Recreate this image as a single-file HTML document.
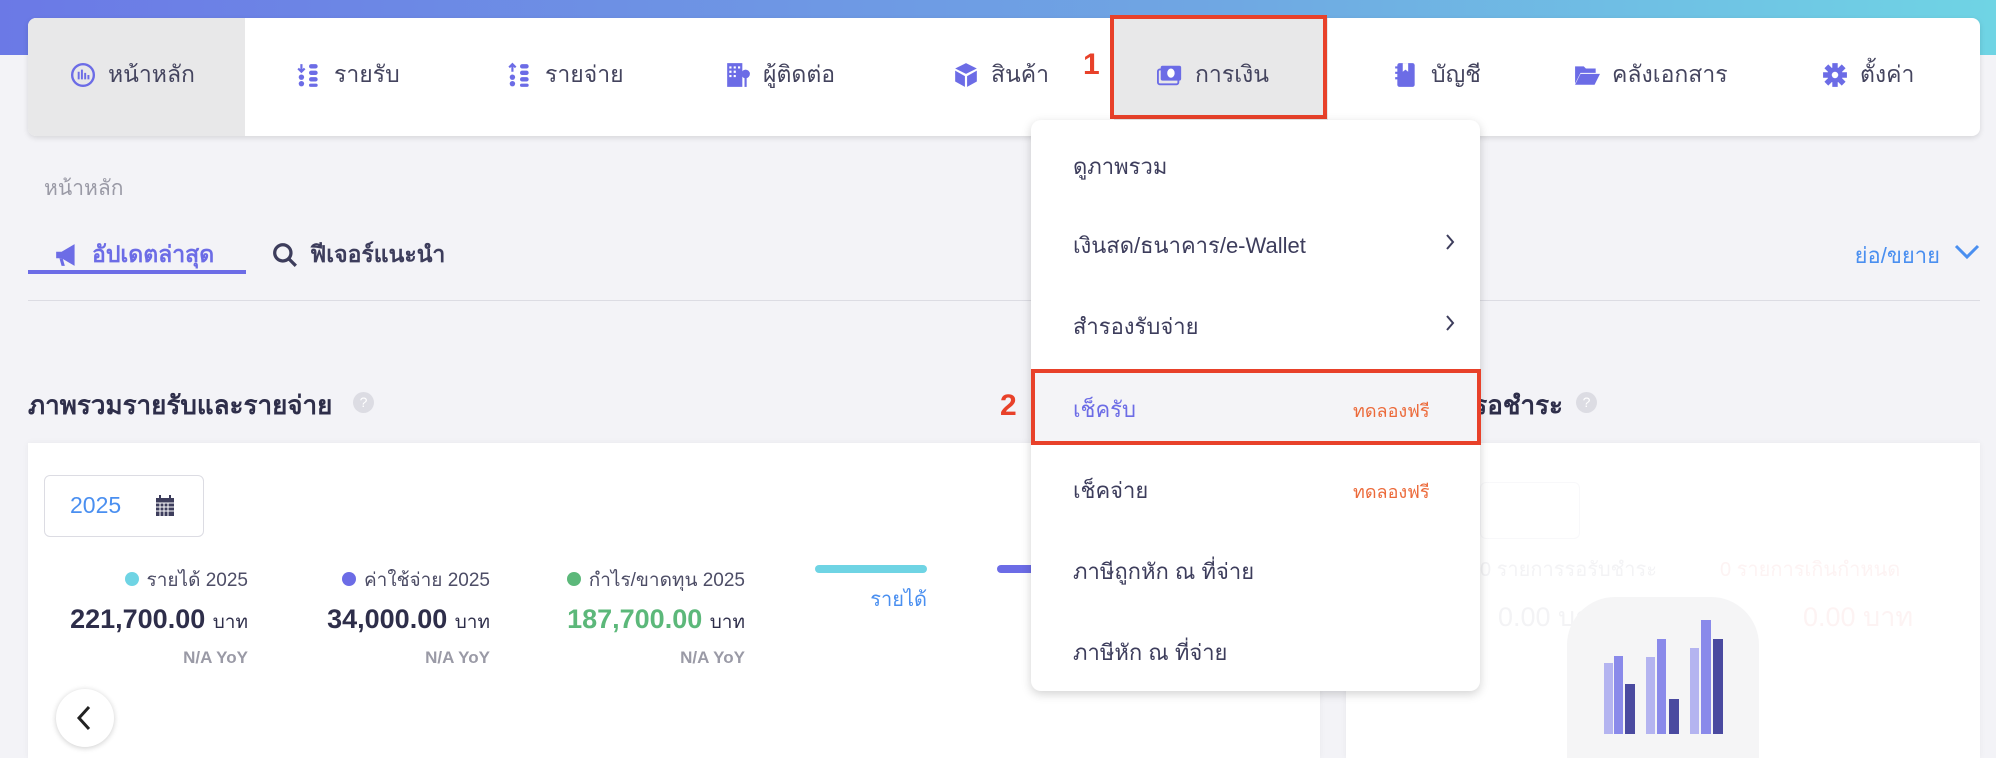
<!DOCTYPE html>
<html><head><meta charset="utf-8"><style>
*{margin:0;padding:0;box-sizing:border-box}
html,body{width:1996px;height:758px;overflow:hidden}
body{background:#f3f3f7;font-family:"Liberation Sans","DejaVu Sans",sans-serif;color:#3d3d5c;position:relative}
.a{position:absolute;white-space:nowrap}
.grad{left:0;top:0;width:1996px;height:55px;background:linear-gradient(90deg,#6b79e6,#6fa6e3 60%,#6fd4e4)}
.nav{left:28px;top:18px;width:1952px;height:118px;background:#fff;border-radius:8px;box-shadow:0 2px 6px rgba(0,0,0,.12);overflow:hidden}
.ni{font-size:23px;color:#44445e;top:57px;display:flex;align-items:center;gap:12px}
.ni svg{width:26px;height:26px}
.card{background:#fff;box-shadow:0 0 6px rgba(0,0,0,.05)}
.dd{left:1031px;top:120px;width:449px;height:571px;background:#fff;border-radius:10px;box-shadow:0 3px 10px rgba(0,0,0,.18)}
.it{font-size:22px;color:#3d3d5c;left:1073px}
.free{font-size:18px;color:#ec6a3a;left:1353px}
.chev{left:1445px}
.red{border:4px solid #e8412a}
</style></head><body>
<div class="a grad"></div>
<div class="a nav">
 <div class="a" style="left:0;top:0;width:217px;height:118px;background:#e8e8e9"></div>
 <div class="a" style="left:1086px;top:0;width:214px;height:118px;background:#e8e8e9"></div>
</div>
<div class="a ni" style="left:70px"><svg viewBox="0 0 24 24"><circle cx="12" cy="12" r="10" fill="none" stroke="#6c6ce6" stroke-width="2.2"/><path d="M8 9v7M11 7v9M14 10v6M17 12v4" stroke="#6c6ce6" stroke-width="1.8"/></svg>หน้าหลัก</div>
<div class="a ni" style="left:296px"><svg viewBox="0 0 24 24" fill="#6c6ce6"><path d="M5 2v6M2 6l3 3 3-3" stroke="#6c6ce6" stroke-width="2" fill="none"/><circle cx="5" cy="14" r="2.5"/><circle cx="5" cy="20" r="2.5"/><rect x="12" y="2" width="8" height="4" rx="2"/><rect x="12" y="8" width="8" height="4" rx="2"/><rect x="12" y="14" width="8" height="4" rx="2"/><rect x="12" y="20" width="8" height="3" rx="1.5"/></svg>รายรับ</div>
<div class="a ni" style="left:507px"><svg viewBox="0 0 24 24" fill="#6c6ce6"><path d="M5 9V3M2 5l3-3 3 3" stroke="#6c6ce6" stroke-width="2" fill="none"/><circle cx="5" cy="14" r="2.5"/><circle cx="5" cy="20" r="2.5"/><rect x="12" y="2" width="8" height="4" rx="2"/><rect x="12" y="8" width="8" height="4" rx="2"/><rect x="12" y="14" width="8" height="4" rx="2"/><rect x="12" y="20" width="8" height="3" rx="1.5"/></svg>รายจ่าย</div>
<div class="a ni" style="left:725px"><svg viewBox="0 0 24 24" fill="#6c6ce6"><path d="M2 1h14v22H2z"/><path d="M4 4h2v2H4zM8 4h2v2H8zM12 4h2v2h-2zM4 8h2v2H4zM8 8h2v2H8zM4 12h2v2H4zM8 12h2v2H8z" fill="#fff"/><circle cx="19" cy="11" r="4"/><path d="M19 14v9" stroke="#6c6ce6" stroke-width="2"/></svg>ผู้ติดต่อ</div>
<div class="a ni" style="left:953px"><svg viewBox="0 0 24 24" fill="#6c6ce6"><path d="M12 1l10 5-10 5L2 6z"/><path d="M2 8l9 5v10l-9-5zM22 8l-9 5v10l9-5z"/></svg>สินค้า</div>
<div class="a ni" style="left:1157px"><svg viewBox="0 0 28 24"><rect x="4" y="2" width="22" height="16" rx="2" fill="#6c6ce6"/><rect x="1" y="6" width="22" height="16" rx="2" fill="none" stroke="#6c6ce6" stroke-width="2"/><ellipse cx="15" cy="10" rx="4" ry="5" fill="#fff"/></svg>การเงิน</div>
<div class="a ni" style="left:1393px"><svg viewBox="0 0 24 24" fill="#6c6ce6"><rect x="4" y="1" width="16" height="22" rx="2"/><path d="M2 5h4M2 10h4M2 15h4" stroke="#6c6ce6" stroke-width="2"/><path d="M9 1h5v8l-2.5-2L9 9z" fill="#fff"/></svg>บัญชี</div>
<div class="a ni" style="left:1574px"><svg viewBox="0 0 24 24" fill="#6c6ce6"><path d="M1 4h8l2 2h9v4H6L1 20z"/><path d="M6 11h18l-5 10H1z"/></svg>คลังเอกสาร</div>
<div class="a ni" style="left:1822px"><svg viewBox="0 0 24 24"><circle cx="12" cy="12" r="7" fill="#6c6ce6"/><path d="M12 1v22M1 12h22M4 4l16 16M20 4L4 20" stroke="#6c6ce6" stroke-width="5"/><circle cx="12" cy="12" r="3" fill="#fff"/></svg>ตั้งค่า</div>
<div class="a red" style="left:1110px;top:15px;width:217px;height:104px"></div>
<div class="a" style="left:1083px;top:48px;font-size:30px;font-weight:bold;color:#e8412a">1</div>

<div class="a" style="left:44px;top:172px;font-size:21px;color:#9a9aa6">หน้าหลัก</div>
<div class="a" style="left:54px;top:237px;font-size:23px;font-weight:bold;color:#6c6ce6;display:flex;align-items:center;gap:12px"><svg width="26" height="26" viewBox="0 0 24 24" fill="#6c6ce6"><path d="M2 9h5l12-7v20L7 15H2z"/><path d="M5 15l2 7h3l-2-7z"/></svg>อัปเดตล่าสุด</div>
<div class="a" style="left:28px;top:270px;width:218px;height:4px;background:#6c6ce6"></div>
<div class="a" style="left:272px;top:237px;font-size:23px;font-weight:bold;color:#3d3d5c;display:flex;align-items:center;gap:12px"><svg width="26" height="26" viewBox="0 0 24 24"><circle cx="10" cy="10" r="7.5" fill="none" stroke="#3d3d5c" stroke-width="3"/><path d="M15 15l7 7" stroke="#3d3d5c" stroke-width="3"/></svg>ฟีเจอร์แนะนำ</div>
<div class="a" style="right:56px;top:238px;font-size:22px;color:#4a8ff0">ย่อ/ขยาย</div>
<svg class="a" style="left:1954px;top:243px" width="26" height="18" viewBox="0 0 26 18"><path d="M2 3l11 11L24 3" fill="none" stroke="#4a8ff0" stroke-width="3"/></svg>
<div class="a" style="left:28px;top:300px;width:1952px;height:1px;background:#dcdce3"></div>

<div class="a" style="left:28px;top:385px;font-size:26px;font-weight:bold;color:#2e2e4a">ภาพรวมรายรับและรายจ่าย</div>
<div class="a" style="left:353px;top:392px;width:21px;height:21px;border-radius:50%;background:#dcdce3;color:#fff;font-size:14px;text-align:center;line-height:21px">?</div>
<div class="a card" style="left:28px;top:443px;width:1292px;height:315px"></div>
<div class="a" style="left:44px;top:475px;width:160px;height:62px;border:1px solid #dcdce3;border-radius:6px"></div>
<div class="a" style="left:70px;top:492px;font-size:23px;color:#4a8ff0">2025</div>
<svg class="a" style="left:155px;top:495px" width="20" height="22" viewBox="0 0 20 22"><rect x="1" y="3" width="18" height="18" fill="#3d3d5c"/><path d="M5 0v4M15 0v4" stroke="#3d3d5c" stroke-width="2"/><path d="M1 8h18M1 12h18M1 16h18M5 8v13M9 8v13M13 8v13" stroke="#fff" stroke-width="1"/></svg>

<div class="a" style="right:1748px;top:565px;font-size:19px;color:#4d4d66"><span style="display:inline-block;width:14px;height:14px;border-radius:50%;background:#6fd4e4;margin-right:8px"></span>รายได้ 2025</div>
<div class="a" style="right:1748px;top:604px;font-size:27px;font-weight:bold;color:#2e2e4a">221,700.00 <span style="font-size:19px;font-weight:normal">บาท</span></div>
<div class="a" style="right:1748px;top:648px;font-size:17px;font-weight:bold;color:#9a9aa6">N/A YoY</div>
<div class="a" style="right:1506px;top:565px;font-size:19px;color:#4d4d66"><span style="display:inline-block;width:14px;height:14px;border-radius:50%;background:#6c6ce6;margin-right:8px"></span>ค่าใช้จ่าย 2025</div>
<div class="a" style="right:1506px;top:604px;font-size:27px;font-weight:bold;color:#2e2e4a">34,000.00 <span style="font-size:19px;font-weight:normal">บาท</span></div>
<div class="a" style="right:1506px;top:648px;font-size:17px;font-weight:bold;color:#9a9aa6">N/A YoY</div>
<div class="a" style="right:1251px;top:565px;font-size:19px;color:#4d4d66"><span style="display:inline-block;width:14px;height:14px;border-radius:50%;background:#5cb87a;margin-right:8px"></span>กำไร/ขาดทุน 2025</div>
<div class="a" style="right:1251px;top:604px;font-size:27px;font-weight:bold;color:#5cb87a">187,700.00 <span style="font-size:19px;font-weight:normal;color:#2e2e4a">บาท</span></div>
<div class="a" style="right:1251px;top:648px;font-size:17px;font-weight:bold;color:#9a9aa6">N/A YoY</div>
<div class="a" style="left:815px;top:565px;width:112px;height:8px;border-radius:4px;background:#6fd4e4"></div>
<div class="a" style="right:1069px;top:583px;font-size:20px;color:#4a8ff0">รายได้</div>
<div class="a" style="left:997px;top:565px;width:60px;height:8px;border-radius:4px;background:#6c6ce6"></div>
<div class="a" style="left:56px;top:689px;width:58px;height:58px;border-radius:50%;background:#fff;box-shadow:0 1px 6px rgba(0,0,0,.2)"></div>
<svg class="a" style="left:76px;top:705px" width="16" height="26" viewBox="0 0 16 26"><path d="M13 2L3 13l10 11" fill="none" stroke="#222" stroke-width="3"/></svg>

<div class="a" style="right:433px;top:385px;font-size:26px;font-weight:bold;color:#2e2e4a">เอกสารรอชำระ</div>
<div class="a" style="left:1576px;top:392px;width:21px;height:21px;border-radius:50%;background:#dcdce3;color:#fff;font-size:14px;text-align:center;line-height:21px">?</div>
<div class="a card" style="left:1346px;top:443px;width:634px;height:315px"></div>
<div class="a" style="left:1480px;top:482px;width:100px;height:57px;border:1px solid #f8f8fa;border-radius:6px"></div>
<div class="a" style="left:1480px;top:553px;font-size:20px;color:#f3f3f5">0 รายการรอรับชำระ</div>
<div class="a" style="left:1720px;top:553px;font-size:20px;color:#fdf3f3">0 รายการเกินกำหนด</div>
<div class="a" style="left:1498px;top:595px;font-size:27px;color:#f3f3f5">0.00 บาท</div>
<div class="a" style="left:1803px;top:595px;font-size:27px;color:#fdf3f3">0.00 บาท</div>
<div class="a" style="left:1567px;top:597px;width:192px;height:161px;border-radius:48px 48px 0 0;background:#f5f5f6"></div>
<svg class="a" style="left:1600px;top:615px" width="130" height="122" viewBox="1600 615 130 122">
<rect x="1604" y="663" width="9" height="71" fill="#b4b4f0"/><rect x="1614" y="656" width="9" height="78" fill="#8a8aea"/><rect x="1625" y="684" width="10" height="50" fill="#4a4aa0"/>
<rect x="1646" y="657" width="9" height="77" fill="#b4b4f0"/><rect x="1657" y="639" width="9" height="95" fill="#8a8aea"/><rect x="1669" y="699" width="10" height="35" fill="#4a4aa0"/>
<rect x="1690" y="648" width="9" height="86" fill="#b4b4f0"/><rect x="1701" y="620" width="10" height="114" fill="#8a8aea"/><rect x="1713" y="639" width="10" height="95" fill="#4a4aa0"/>
</svg>

<div class="a dd"></div>
<div class="a" style="left:1031px;top:369px;width:449px;height:75px;background:#f4f4f7"></div>
<div class="a it" style="top:149px">ดูภาพรวม</div>
<div class="a it" style="top:228px">เงินสด/ธนาคาร/e-Wallet</div>
<svg class="a chev" style="top:233px" width="10" height="18" viewBox="0 0 10 18"><path d="M2 2l6 7-6 7" fill="none" stroke="#3d3d5c" stroke-width="2"/></svg>
<div class="a it" style="top:309px">สำรองรับจ่าย</div>
<svg class="a chev" style="top:314px" width="10" height="18" viewBox="0 0 10 18"><path d="M2 2l6 7-6 7" fill="none" stroke="#3d3d5c" stroke-width="2"/></svg>
<div class="a it" style="top:392px;color:#6c6ce6">เช็ครับ</div><div class="a free" style="top:396px">ทดลองฟรี</div>
<div class="a it" style="top:473px">เช็คจ่าย</div><div class="a free" style="top:477px">ทดลองฟรี</div>
<div class="a it" style="top:554px">ภาษีถูกหัก ณ ที่จ่าย</div>
<div class="a it" style="top:635px">ภาษีหัก ณ ที่จ่าย</div>
<div class="a red" style="left:1031px;top:369px;width:450px;height:76px"></div>
<div class="a" style="left:1000px;top:389px;font-size:30px;font-weight:bold;color:#e8412a">2</div>
</body></html>
